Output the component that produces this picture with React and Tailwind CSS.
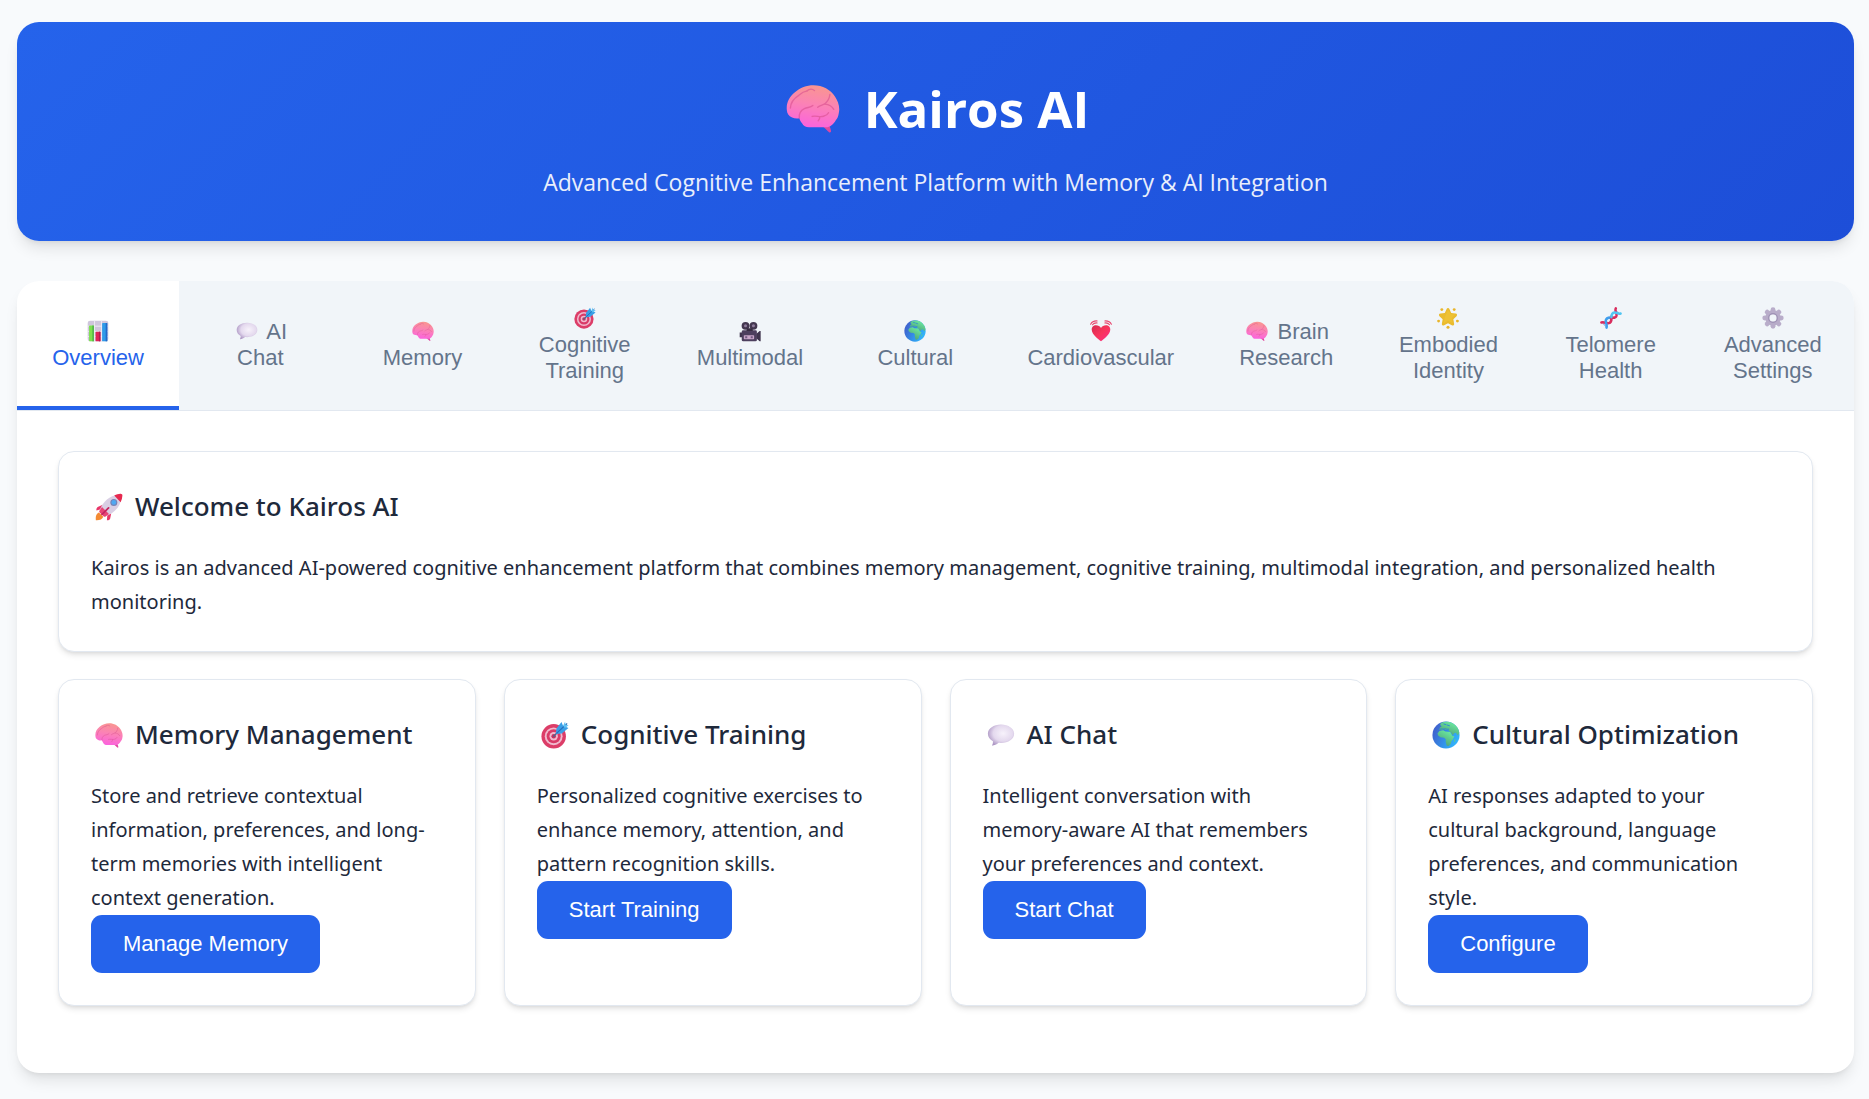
import { useState } from "react";

function Brain() {
  return (
    <>
      <defs>
        <linearGradient id="brainFill" x1="0.6" y1="0" x2="0.4" y2="1">
          <stop offset="0" stopColor="#f9968f" />
          <stop offset="0.45" stopColor="#fb83b4" />
          <stop offset="1" stopColor="#fb62de" />
        </linearGradient>
      </defs>
      <path d="M24.5 24.500c1 1.500 1.800 3 2.200 5.200.1.700-.7 1-1.200.6l-5-4.600z" fill="#e0479f" />
      <path
        d="M.5 17.300C0 13 2 9.300 5.300 6.700 8.300 4 12.200 2.500 16.300 2.500c5.400 0 10.100 2.600 12.700 6.700 1.900 2.800 3.100 6.400 2.300 9.700-.3 1.900-.8 3.300-1.800 4.300-1.300 2.400-3.400 4.200-5.900 4.200H13.600c-1.900 0-3.300-.9-4.100-2.400-.9-.9-1.300-1.900-1.600-2.900-1.300.3-3 .2-4.300-.5C1.600 20.700.6 19.100.5 17.300z"
        fill="url(#brainFill)"
      />
      <g fill="none" stroke="#d9508f" strokeLinecap="round" strokeLinejoin="round" strokeWidth="0.8" opacity="0.6">
        <path d="M2.600 16c.2-3.300 2.200-5.800 5-7.500 1.700-1.500 3-2.300 5-2.600" />
        <path d="M12.500 5.800c1.400-1.400 3.200-1.300 4.400-.1" />
        <path d="M7.900 22c-.3-2.500.8-4.500 3-5.600 2-.9 3.600-.6 5-1.900" />
        <path d="M26 8c-.2 2.800-1.500 4.200-3 5.600-1.500.8-3 .8-4.200 2" />
        <path d="M23 13.700c2.200.2 4.300 1.200 5.300 3.100" />
        <path d="M15.500 21c2.200-.7 4.400.6 6.700-.1 1.600-.4 2.500-1.100 3-2.100" />
        <path d="M20 21.200c.1 1-.2 1.700-.9 2.400" />
      </g>
    </>
  );
}

function Chart() {
  return (
    <>
      <rect x="1" y="1" width="30" height="30" rx="3.500" fill="#cfc6dc" />
      <path d="M1 9h30M1 16.500h30M1 24h30M11 1v30M21 1v30" stroke="#f1edf6" strokeWidth="1.300" />
      <rect x="3" y="8" width="7" height="23" rx="1" fill="#7de04f" />
      <rect x="7.800" y="8" width="2.200" height="23" fill="#4fb34a" />
      <rect x="12.500" y="17" width="7" height="14" rx="1" fill="#e02457" />
      <rect x="17.400" y="17" width="2.100" height="14" fill="#b01c55" />
      <rect x="22" y="4.500" width="7.500" height="26.500" rx="1" fill="#2f9be8" />
      <rect x="27.200" y="4.500" width="2.300" height="26.500" fill="#2468c9" />
    </>
  );
}

function Bubble() {
  return (
    <>
      <defs>
        <radialGradient id="bubbleFill" cx="0.58" cy="0.42" r="0.62">
          <stop offset="0" stopColor="#f7f2fb" />
          <stop offset="0.6" stopColor="#e4d9ee" />
          <stop offset="1" stopColor="#ad97c4" />
        </radialGradient>
      </defs>
      <path
        d="M16 4C7.600 4 1 8.500 1 14.500c0 3.700 2.200 6.700 5.800 8.600.1 1.500-.1 3-.8 4.200-.3.600.2 1 .8.800 2.600-.7 4.800-1.700 6.400-3.300.9.100 1.800.2 2.800.200 8.400 0 15-4.500 15-10.500S24.400 4 16 4z"
        fill="url(#bubbleFill)"
      />
    </>
  );
}

function Target() {
  return (
    <>
      <circle cx="14.500" cy="17.500" r="14" fill="#dc3d68" />
      <circle cx="14.500" cy="17.500" r="10.200" fill="#f0b9cd" />
      <circle cx="14.500" cy="17.500" r="8" fill="#d93b68" />
      <circle cx="14.500" cy="17.500" r="4.800" fill="#f0b9cd" />
      <circle cx="14.500" cy="17.500" r="2.600" fill="#c8325f" />
      <path d="M14.500 17.500 22 10" stroke="#50628d" strokeWidth="1.700" strokeLinecap="round" />
      <path d="M17 14.800l.6-6.300L23.400 1l1.800 4.300L31.400 8l-7.600 6.300z" fill="#3a9fe6" />
      <path d="M18 13.900 29.500 3.200" stroke="#246fbd" strokeWidth="1.400" strokeLinecap="round" />
      <path d="M25.200 5.300 27.500.8l.7 3.700 3.400.4-4.200 3z" fill="#5cc0f4" />
    </>
  );
}

function Camera() {
  return (
    <>
      <path d="M1 18h4v7H1zM25 20.500 30 16h1.500v15H30l-5-4.500z" fill="#40354e" />
      <rect x="4" y="15" width="22" height="16" rx="2" fill="#4d3f5e" />
      <rect x="7" y="22" width="15" height="6" rx="1" fill="#c7a5c8" />
      <path d="M9 23.500h3v3H9zM17 23.500h3v3h-3z" fill="#735b82" />
      <circle cx="9.500" cy="8.500" r="5.700" fill="#443750" />
      <circle cx="21" cy="8.500" r="5.700" fill="#443750" />
      <circle cx="9.500" cy="8.500" r="2.200" fill="#8f7c9c" />
      <circle cx="21" cy="8.500" r="2.200" fill="#8f7c9c" />
      <rect x="11" y="12" width="9" height="4" fill="#372c42" />
    </>
  );
}

function Globe() {
  return (
    <>
      <defs>
        <linearGradient id="globeSea" x1="0.1" y1="0.3" x2="0.95" y2="0.7">
          <stop offset="0" stopColor="#3f65cf" />
          <stop offset="0.55" stopColor="#3293ea" />
          <stop offset="1" stopColor="#32b5fb" />
        </linearGradient>
        <linearGradient id="globeLand" x1="0.9" y1="0" x2="0.3" y2="1">
          <stop offset="0" stopColor="#6ff5a5" />
          <stop offset="1" stopColor="#4d9c76" />
        </linearGradient>
      </defs>
      <circle cx="16" cy="16" r="15.500" fill="url(#globeSea)" />
      <path
        d="M10 2.500C16-.5 23 .8 27.300 5.500c2.200 2.200 3.500 5 3.900 8.200l-1.700 2.800-2.200-3.200-2 .8-1.600 2.400-2.200-3.600-1.700-.8-1.300-2.300-3 .5-1.800-1.200-2.500 1.500-2.900-.4.800-2.700 2-1.500-1.800-1.500z"
        fill="url(#globeLand)"
      />
      <path
        d="M6.300 14.200 8.500 11.300l4.300-.6 2.500 1.300 5.500.5 2.500 4.700 2.300.3-2 3.900-1.500 1.600-.5 3-2.600 2.700-2.200-.5-1.200-4.400.3-2.800-1.900-2-4.300-.3-2.700-2.200z"
        fill="url(#globeLand)"
      />
      <path d="m25.300 21.500 1.300-1.200-.2 2.800-1.100 1.100z" fill="#5bcf8c" />
      <path d="M9.500 9.300c1.500-1 3 .4 4.500-.3s3 1 5.200.4M17 4.500l3 1M13.500 3.400l2 .6" stroke="#3286d5" strokeWidth="1.100" fill="none" strokeLinecap="round" />
    </>
  );
}

function Heart() {
  return (
    <>
      <defs>
        <linearGradient id="heartFill" x1="0" y1="0" x2="1" y2="1">
          <stop offset="0" stopColor="#d62a50" />
          <stop offset="0.5" stopColor="#f8355c" />
          <stop offset="1" stopColor="#fb2f8a" />
        </linearGradient>
      </defs>
      <path
        d="M16 31C11 27.500 3 21 2.500 14.300 2.200 10.300 5 7.500 8.700 7.500c3.200 0 5.800 1.500 7.300 4 1.500-2.500 4.100-4 7.300-4 3.700 0 6.500 2.800 6.200 6.800C29 21 21 27.500 16 31z"
        fill="url(#heartFill)"
      />
      <g fill="none" stroke="#e8476f" strokeWidth="1.500" strokeLinecap="round">
        <path d="M.9 6.300C2.500 2.900 6 1 10.500 1.300M3.600 7C5 4.900 7.500 3.900 10.500 4.300" />
        <path d="M31.100 6.300C29.500 2.900 26 1 21.500 1.300M28.400 7C27 4.900 24.500 3.900 21.500 4.300" />
      </g>
    </>
  );
}

function Star() {
  return (
    <>
      <path
        d="M16 1.500c.9 0 1.600.6 2 1.500l2.700 5.700 6.400.9c2.100.3 2.800 2.400 1.300 3.800l-4.600 4.500 1.100 6.400c.4 2.100-1.500 3.400-3.300 2.400L16 23.700l-5.600 3c-1.800 1-3.700-.3-3.300-2.400l1.100-6.400-4.600-4.500C2.100 12 2.800 9.900 4.900 9.600l6.400-.9L14 3c.4-.9 1.100-1.500 2-1.500z"
        fill="#eabb2e"
      />
      <path d="M16 3.500 20 10l6.500 1-5 5 1.200 7.500L16 20l-6.500 4L11 16z" fill="#f2c739" opacity="0.5" />
      <g fill="#e9b52b">
        <circle cx="7" cy="3.800" r="2.100" />
        <circle cx="25" cy="3.800" r="2.100" />
        <circle cx="2.300" cy="20.500" r="2.100" />
        <circle cx="29.700" cy="20.500" r="2.100" />
        <circle cx="16" cy="29.500" r="2.200" />
      </g>
    </>
  );
}

function Dna() {
  return (
    <>
      <path
        d="M4 23.500l5 5M7 22.500l3 3M12.500 15l4.500 4.500M15 13.300l3.500 3.500M23 5l4.500 4.500M21.500 8l3 3"
        stroke="#8fb6e8"
        strokeWidth="1.800"
        strokeLinecap="round"
      />
      <g fill="none" strokeWidth="3.600" strokeLinecap="round">
        <path d="M2 22.500c4.500-1.500 7.500 2 11 1 4-1.200 4-5 3.500-9.500" stroke="#d92c5d" />
        <path d="M9.500 30c1.500-4.500-2-7.500-1-11 1.200-4 5-4 9.500-3.500" stroke="#3f9fee" />
        <path d="M16 15.500c4 .7 7 .5 8-3 .8-3.500-3-6.500-1-10.500" stroke="#d92c5d" />
        <path d="M16.500 15c.2-4.500 1-6.500 4.500-7 3.500-.4 5.500 2.700 9 1.500" stroke="#51c5f2" />
      </g>
    </>
  );
}

function Gear() {
  return (
    <>
      <g fill="#b9adca">
        {[0, 45, 90, 135, 180, 225, 270, 315].map((angle) => (
          <circle key={angle} cx="16" cy="4" r="3.500" transform={`rotate(${angle} 16 16)`} />
        ))}
      </g>
      <circle cx="16" cy="16" r="8.500" fill="none" stroke="#b8acc9" strokeWidth="6" />
      <circle cx="16" cy="16" r="6.300" fill="none" stroke="#9f92b5" strokeWidth="1.800" />
    </>
  );
}

function Rocket() {
  return (
    <>
      <path d="M1 31c-.6-4 .3-7.500 3.500-8.800l5 4.800C8.500 30 5 31.300 1 31z" fill="#f48a33" />
      <path d="M9 13.500 3 16c-1.300 1-1.700 2.500-1.300 4l6-1.800zM18.500 23.500l-1.200 5.800c-.8 1.300-2.200 1.900-3.700 1.700l.5-6.300z" fill="#e83568" />
      <path d="M5 20.500C8.500 11 16 2.500 27 2c2 0 3 1 3 3-.5 11-9 18.500-18.500 22z" fill="#d9cfe4" />
      <path d="M5 20.500l3-4.500 8 8-4.500 3c-.8.300-1.300.1-1.800-.4L5.300 22.300c-.5-.5-.6-1.100-.3-1.800z" fill="#e84476" />
      <path d="M22 2.800C25 1.500 28 .6 30 1c1.200.2 1.400 1 1.300 2-.1 2.500-.8 5-2 7.500z" fill="#e6294f" />
      <circle cx="21.500" cy="10.800" r="4" fill="#7583b7" />
      <circle cx="21.500" cy="10.800" r="2.700" fill="#4fa8f2" />
      <path d="M15.500 17 8 24.500" stroke="#c22560" strokeWidth="2" strokeLinecap="round" />
    </>
  );
}

function Emoji({ art: Art, className }) {
  return (
    <svg viewBox="0 0 32 32" aria-hidden="true" className={className}>
      <Art />
    </svg>
  );
}

const tabs = [
  { label: "Overview", art: Chart },
  { label: "AI Chat", art: Bubble },
  { label: "Memory", art: Brain },
  { label: "Cognitive Training", art: Target },
  { label: "Multimodal", art: Camera },
  { label: "Cultural", art: Globe },
  { label: "Cardiovascular", art: Heart },
  { label: "Brain Research", art: Brain },
  { label: "Embodied Identity", art: Star },
  { label: "Telomere Health", art: Dna },
  { label: "Advanced Settings", art: Gear },
];

const features = [
  {
    title: "Memory Management",
    art: Brain,
    text: "Store and retrieve contextual information, preferences, and long-term memories with intelligent context generation.",
    action: "Manage Memory",
  },
  {
    title: "Cognitive Training",
    art: Target,
    text: "Personalized cognitive exercises to enhance memory, attention, and pattern recognition skills.",
    action: "Start Training",
  },
  {
    title: "AI Chat",
    art: Bubble,
    text: "Intelligent conversation with memory-aware AI that remembers your preferences and context.",
    action: "Start Chat",
  },
  {
    title: "Cultural Optimization",
    art: Globe,
    text: "AI responses adapted to your cultural background, language preferences, and communication style.",
    action: "Configure",
  },
];

function Card({ title, art, text, action }) {
  return (
    <article className="rounded-2xl border border-[#e2e8f0] bg-white p-8 shadow-md">
      <h2 className="mb-[22px] flex items-center gap-3 pl-1 text-[26px] leading-[45px] font-medium">
        <Emoji art={art} className="size-7 shrink-0" />
        {title}
      </h2>
      <p className="text-[20px] leading-[34px]">{text}</p>
      {action && (
        <button
          type="button"
          className="block h-[58px] rounded-[11px] bg-[#2563eb] px-8 font-['Liberation_Sans',Arial,sans-serif] text-[22px] leading-[26px] text-white"
        >
          {action}
        </button>
      )}
    </article>
  );
}

export default function App() {
  const [active, setActive] = useState("Overview");
  return (
    <div className="min-h-screen bg-[#f8fafc] py-[22px] pr-[15px] pl-[17px] font-['Noto_Sans','Open_Sans',sans-serif] text-[#1e293b]">
      <header className="mb-10 rounded-[22px] bg-linear-135 from-[#2563eb] to-[#1d4ed8] pt-[43px] pb-[39px] text-center font-['Open_Sans','Noto_Sans',sans-serif] text-white shadow-lg">
        <h1 className="flex items-center justify-center gap-6 pl-1 text-[51px] leading-[86px] font-bold">
          <Emoji art={Brain} className="size-[54px]" />
          Kairos AI
        </h1>
        <p className="mt-3 text-[23px] leading-[39px] opacity-90">
          Advanced Cognitive Enhancement Platform with Memory &amp; AI Integration
        </p>
      </header>

      <main className="overflow-hidden rounded-[22px] bg-white shadow-lg">
        <nav className="flex border-b border-[#e2e8f0] bg-[#f1f5f9]">
          {tabs.map(({ label, art }) => (
            <button
              key={label}
              type="button"
              onClick={() => setActive(label)}
              className={`flex-1 border-b-4 px-[31px] pt-[25px] pb-[22px] font-['Liberation_Sans',Arial,sans-serif] text-[22px] leading-[26px] ${
                active === label
                  ? "border-[#2563eb] bg-white text-[#2563eb]"
                  : "border-transparent text-[#64748b]"
              }`}
            >
              <Emoji art={art} className="mx-[3px] inline-block size-[22px] align-[-3px]" /> {label}
            </button>
          ))}
        </nav>

        <div className="px-[41px] pt-10 pb-[67px]">
          <Card
            title="Welcome to Kairos AI"
            art={Rocket}
            text="Kairos is an advanced AI-powered cognitive enhancement platform that combines memory management, cognitive training, multimodal integration, and personalized health monitoring."
          />
          <div className="mt-[27px] grid grid-cols-4 gap-7">
            {features.map((feature) => (
              <Card key={feature.title} {...feature} />
            ))}
          </div>
        </div>
      </main>
    </div>
  );
}
